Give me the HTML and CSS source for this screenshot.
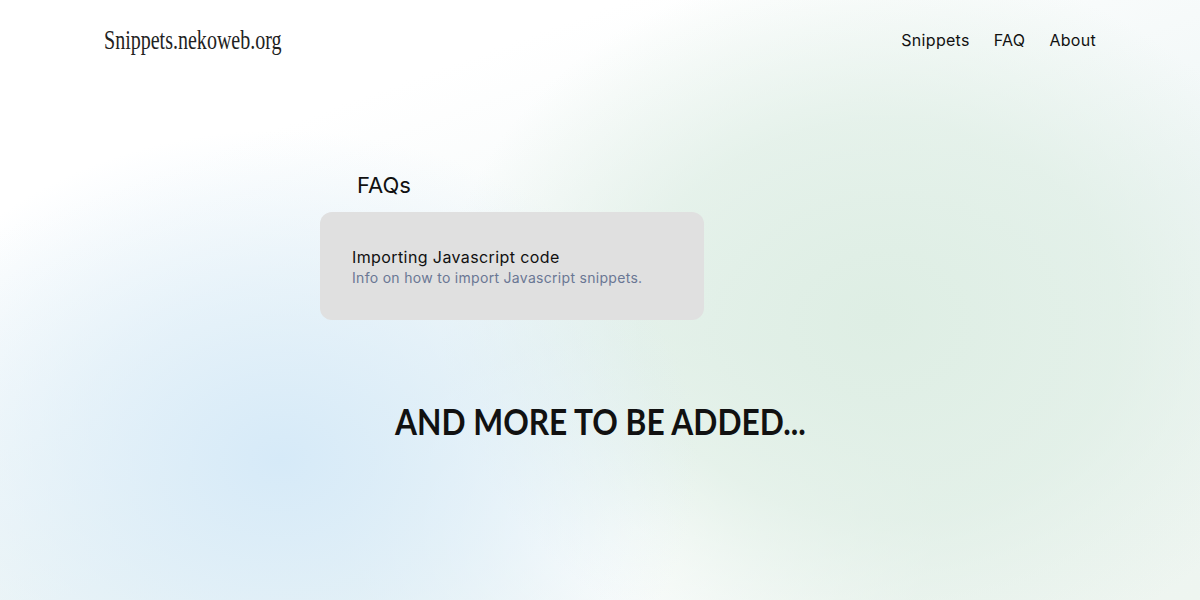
FILE: index.html
```html
<!DOCTYPE html>
<html lang="en">
<head>
<meta charset="utf-8">
<title>Snippets.nekoweb.org - FAQ</title>
<link rel="stylesheet" href="styles.css">
</head>
<body>
<div class="page">
  <header class="header">
    <a class="logo" href="#">Snippets.nekoweb.org</a>
    <nav class="nav">
      <a href="#">Snippets</a>
      <a href="#">FAQ</a>
      <a href="#">About</a>
    </nav>
  </header>
  <main class="main">
    <section class="faqs">
      <h2 class="faqs-title">FAQs</h2>
      <a class="card" href="#">
        <span class="card-title">Importing Javascript code</span>
        <span class="card-desc">Info on how to import Javascript snippets.</span>
      </a>
    </section>
    <h1 class="more">AND MORE TO BE ADDED...</h1>
  </main>
</div>
</body>
</html>
```
FILE: styles.css
```css
* { box-sizing: border-box; }
html, body { margin: 0; padding: 0; }
body {
  width: 1200px;
  height: 600px;
  overflow: hidden;
  font-family: "Inter", "Noto Sans", sans-serif;
  color: #111;
  background:
    radial-gradient(ellipse 420px 330px at 280px 460px, rgba(214,234,248,1) 0%, rgba(218,236,248,0.6) 50%, rgba(220,236,248,0) 100%),
    radial-gradient(ellipse 440px 360px at 880px 320px, rgba(222,238,228,1) 0%, rgba(222,238,228,0.7) 55%, rgba(222,238,228,0) 100%),
    radial-gradient(ellipse 300px 200px at 640px 530px, rgba(255,255,255,1) 0%, rgba(255,255,255,0) 100%),
    linear-gradient(160deg, #ffffff 0%, #ffffff 22%, #eff6f6 60%, #eef5f0 100%);
}
.page {
  display: flex;
  flex-direction: column;
  height: 600px;
}
.header {
  display: flex;
  justify-content: space-between;
  align-items: center;
  padding: 22px 104px 0 104px;
  height: 58px;
}
.logo {
  font-family: "Liberation Serif", serif;
  font-size: 28px;
  color: #222;
  text-decoration: none;
  display: inline-block;
  transform: scaleX(0.715);
  transform-origin: left center;
}
.nav {
  display: flex;
  gap: 24px;
}
.nav a {
  font-size: 16px;
  letter-spacing: 0.3px;
  color: #111;
  text-decoration: none;
}
.main {
  display: flex;
  flex-direction: column;
  align-items: center;
  padding-top: 112px;
}
.faqs {
  width: 560px;
  display: flex;
  flex-direction: column;
}
.faqs-title {
  font-weight: 400;
  font-size: 22px;
  margin: 0 0 12px 37px;
  line-height: 30px;
  color: #111;
}
.card {
  width: 384px;
  height: 108px;
  background: #e0e0e0;
  border-radius: 12px;
  padding: 34px 32px 0 32px;
  display: flex;
  flex-direction: column;
  text-decoration: none;
}
.card-title {
  font-size: 16px;
  letter-spacing: 0.4px;
  color: #111;
  line-height: 22px;
}
.card-desc {
  font-size: 14px;
  letter-spacing: 0.3px;
  color: #6a7794;
  line-height: 20px;
}
.more {
  margin: 81px 0 0 0;
  font-family: "Lato", sans-serif;
  font-weight: 700;
  font-size: 36px;
  line-height: 40px;
  color: #111;
  transform: scaleX(0.88);
}
```
